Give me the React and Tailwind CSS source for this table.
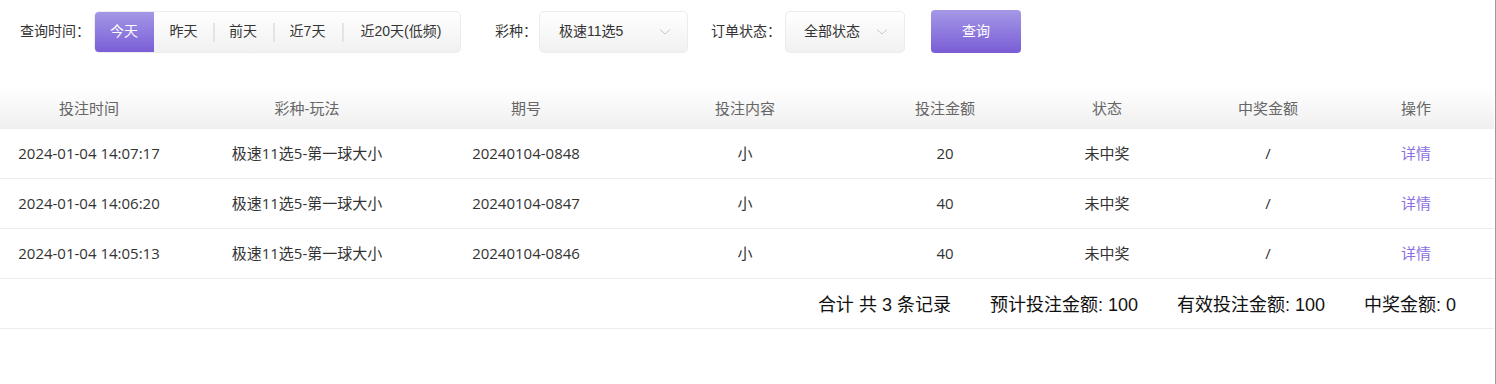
import React from "react";

const font = { fontFamily: '"Liberation Sans", "Noto Sans CJK SC", sans-serif' };
const tfont = { fontFamily: '"Open Sans", "Noto Sans CJK SC", sans-serif' };

function Chevron() {
  return (
    <svg width="12" height="8" viewBox="0 0 12 8" fill="none" className="shrink-0">
      <path d="M1 1.5 L6 6 L11 1.5" stroke="#c8c8c8" strokeWidth="1" />
    </svg>
  );
}

const rows = [
  ["2024-01-04 14:07:17", "极速11选5-第一球大小", "20240104-0848", "小", "20", "未中奖", "/"],
  ["2024-01-04 14:06:20", "极速11选5-第一球大小", "20240104-0847", "小", "40", "未中奖", "/"],
  ["2024-01-04 14:05:13", "极速11选5-第一球大小", "20240104-0846", "小", "40", "未中奖", "/"],
];

const cols = "grid grid-cols-[178px_258px_180px_258px_142px_182px_140px_1fr]";

export default function App() {
  const tabs = [
    ["昨天", "w-[59px]"],
    ["前天", "w-[60px]"],
    ["近7天", "w-[69px]"],
    ["近20天(低频)", "w-[118px]"],
  ];
  return (
    <div className="w-[1496px] h-[384px] bg-white border-r border-[#9a9a9a] text-[14px] text-[#333]" style={font}>
      <div className="flex items-center h-[63px] pl-[20px]">
        <span className="w-[74px] text-[14px] text-[#333]">查询时间：</span>
        <div className="flex h-[42px] rounded-[5px] border border-[#ececec] bg-gradient-to-b from-white to-[#f1f1f1] overflow-hidden">
          <div className="w-[60px] flex items-center justify-center text-white bg-gradient-to-b from-[#a698e6] to-[#7a5cd6] -ml-px -my-px">
            今天
          </div>
          {tabs.map(([t, w], i) => (
            <div key={t} className={`${w} flex items-center justify-center relative`}>
              {i > 0 && <span className="absolute left-0 top-[11px] h-[19px] w-[2px] bg-[#e4e4e4]" />}
              {t}
            </div>
          ))}
        </div>
        <span className="ml-[34px] w-[44px]">彩种：</span>
        <div className="w-[149px] h-[42px] rounded-[5px] border border-[#ececec] bg-gradient-to-b from-white to-[#f1f1f1] flex items-center justify-between pl-[19px] pr-[16px]">
          <span>极速11选5</span>
          <Chevron />
        </div>
        <span className="ml-[23px] w-[74px]">订单状态：</span>
        <div className="w-[120px] h-[42px] rounded-[5px] border border-[#ececec] bg-gradient-to-b from-white to-[#f1f1f1] flex items-center justify-between pl-[18px] pr-[16px]">
          <span>全部状态</span>
          <Chevron />
        </div>
        <button className="ml-[26px] w-[90px] h-[43px] rounded-[4px] bg-gradient-to-b from-[#a698e6] to-[#7a5cd6] text-white text-[14px] flex items-center justify-center">
          查询
        </button>
      </div>

      <div className="mt-[25px] w-[1494px] text-[15px]" style={tfont}>
        <div className={`${cols} h-[41px] items-center text-[#666] bg-gradient-to-b from-white to-[#efefef]`}>
          {["投注时间", "彩种-玩法", "期号", "投注内容", "投注金额", "状态", "中奖金额", "操作"].map((h) => (
            <div key={h} className="text-center">{h}</div>
          ))}
        </div>
        {rows.map((r, i) => (
          <div key={i} className={`${cols} h-[50px] items-center border-b border-[#ececec] text-[#333]`}>
            {r.map((c, j) => (
              <div key={j} className="text-center">{c}</div>
            ))}
            <div className="text-center text-[#8a6fe0]">详情</div>
          </div>
        ))}
        <div className="h-[50px] flex items-center justify-end gap-[39px] pr-[38px] pt-[3px] border-b border-[#ececec] text-[18px] text-[#111]" style={font}>
          <span>合计 共 3 条记录</span>
          <span>预计投注金额: 100</span>
          <span>有效投注金额: 100</span>
          <span>中奖金额: 0</span>
        </div>
      </div>
    </div>
  );
}
